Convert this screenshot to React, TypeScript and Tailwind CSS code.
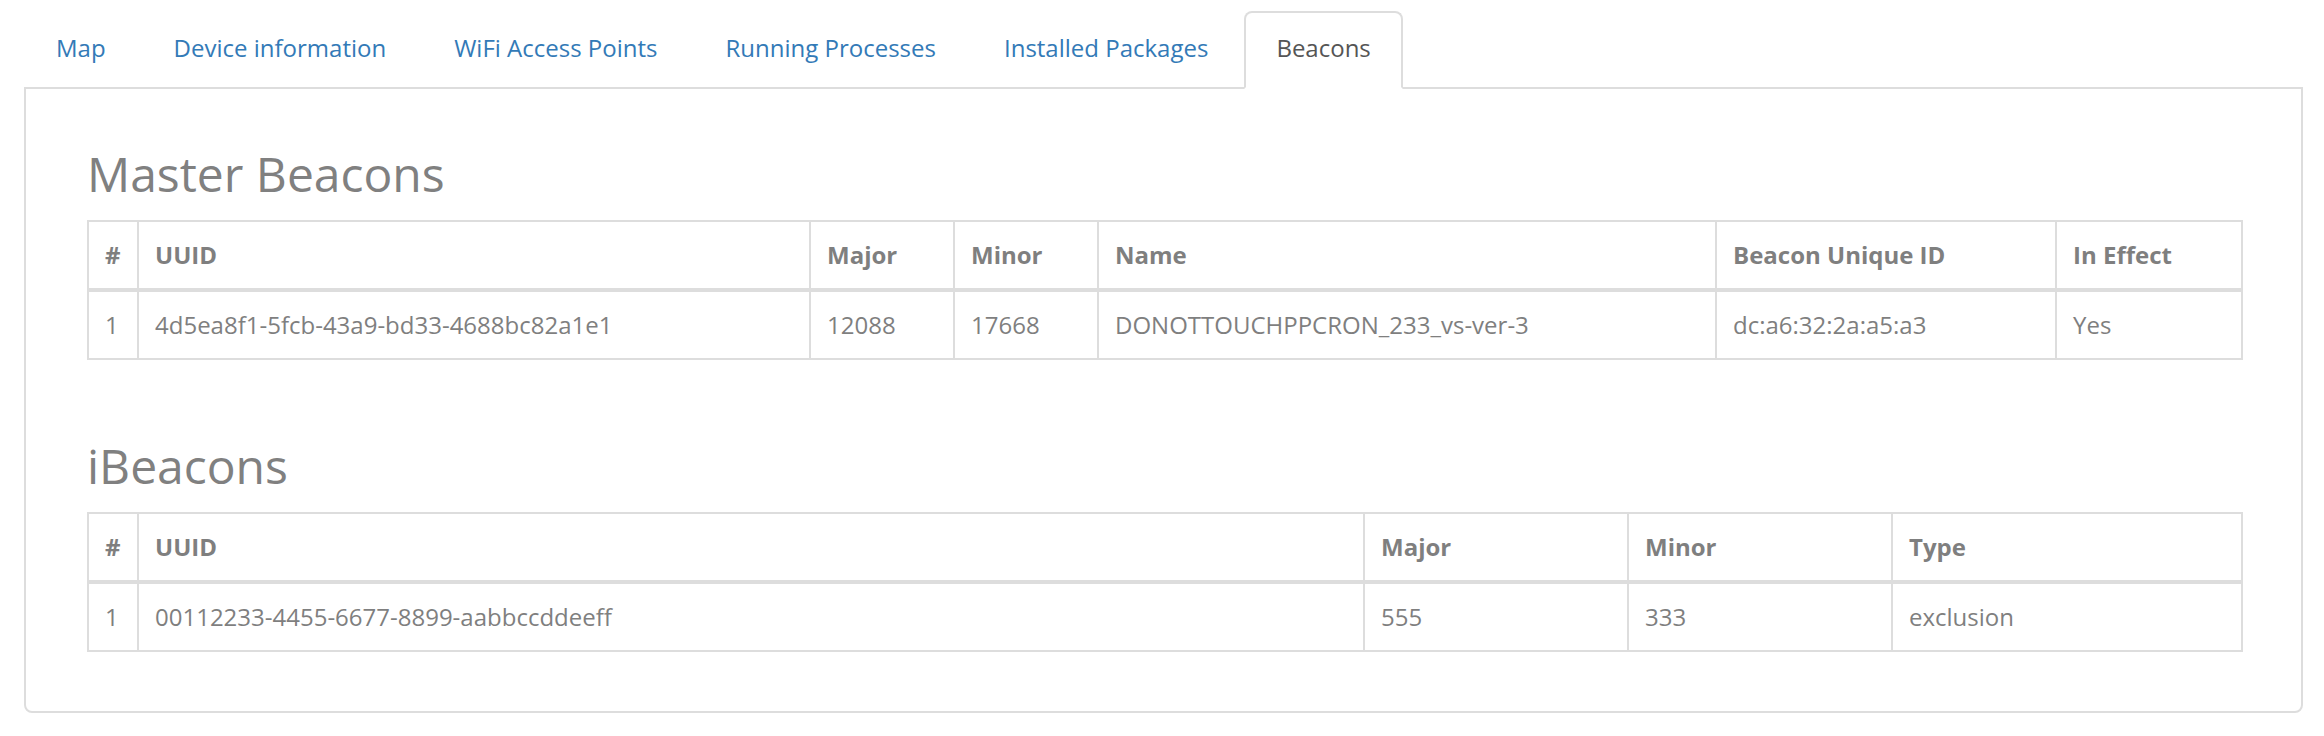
import React from 'react'

const tabs = [
  'Map',
  'Device information',
  'WiFi Access Points',
  'Running Processes',
  'Installed Packages',
  'Beacons',
]

const masterCols = [
  { label: '#', w: 'w-[50px]' },
  { label: 'UUID', w: 'w-[672px]' },
  { label: 'Major', w: 'w-[144px]' },
  { label: 'Minor', w: 'w-[144px]' },
  { label: 'Name', w: 'w-[618px]' },
  { label: 'Beacon Unique ID', w: 'w-[340px]' },
  { label: 'In Effect', w: 'w-[186px]' },
]

const masterRows = [
  ['1', '4d5ea8f1-5fcb-43a9-bd33-4688bc82a1e1', '12088', '17668', 'DONOTTOUCHPPCRON_233_vs-ver-3', 'dc:a6:32:2a:a5:a3', 'Yes'],
]

const iCols = [
  { label: '#', w: 'w-[50px]' },
  { label: 'UUID', w: 'w-[1226px]' },
  { label: 'Major', w: 'w-[264px]' },
  { label: 'Minor', w: 'w-[264px]' },
  { label: 'Type', w: 'w-[350px]' },
]

const iRows = [['1', '00112233-4455-6677-8899-aabbccddeeff', '555', '333', 'exclusion']]

function BeaconTable({ cols, rows }: { cols: { label: string; w: string }[]; rows: string[][] }) {
  return (
    <table className="w-full table-fixed border-collapse border-2 border-[#ddd] text-[24px] leading-[34px] text-[#7f7f7f]">
      <colgroup>
        {cols.map((c) => (
          <col key={c.label} className={c.w} />
        ))}
      </colgroup>
      <thead>
        <tr>
          {cols.map((c) => (
            <th
              key={c.label}
              className="border-2 border-b-4 border-[#ddd] px-[16px] py-[16px] text-left font-bold"
            >
              {c.label}
            </th>
          ))}
        </tr>
      </thead>
      <tbody>
        {rows.map((r, i) => (
          <tr key={i}>
            {r.map((cell, j) => (
              <td key={j} className="border-2 border-[#ddd] px-[16px] py-[16px] whitespace-nowrap">
                {cell}
              </td>
            ))}
          </tr>
        ))}
      </tbody>
    </table>
  )
}

export default function App() {
  const active = 'Beacons'

  return (
    <div className="w-[2324px] h-[736px] bg-white pl-[24px] pr-[21px] font-['Open_Sans',sans-serif]">
      {/* tabs */}
      <ul className="flex pt-[11px] -mb-[2px]">
        {tabs.map((t) => (
          <li key={t} className="mr-[4px]">
            <span
              className={`block border-2 rounded-t-[8px] px-[30px] pt-[18px] pb-[22px] text-[24px] leading-[34px] ${
                t === active
                  ? 'relative z-10 bg-white border-[#ddd] border-b-white text-[#555]'
                  : 'border-transparent text-[#337ab7]'
              }`}
            >
              {t}
            </span>
          </li>
        ))}
      </ul>

      {/* panel */}
      <div className="border-2 border-[#ddd] rounded-b-[8px] pl-[61px] pr-[60px] pt-[59px] pb-[59px]">
        <h3 className="text-[48px] leading-[52px] font-normal text-[#808080] mb-[20px]">Master Beacons</h3>
        <BeaconTable cols={masterCols} rows={masterRows} />

        <h3 className="text-[48px] leading-[52px] font-normal text-[#808080] mt-[80px] mb-[20px]">iBeacons</h3>
        <BeaconTable cols={iCols} rows={iRows} />
      </div>
    </div>
  )
}
